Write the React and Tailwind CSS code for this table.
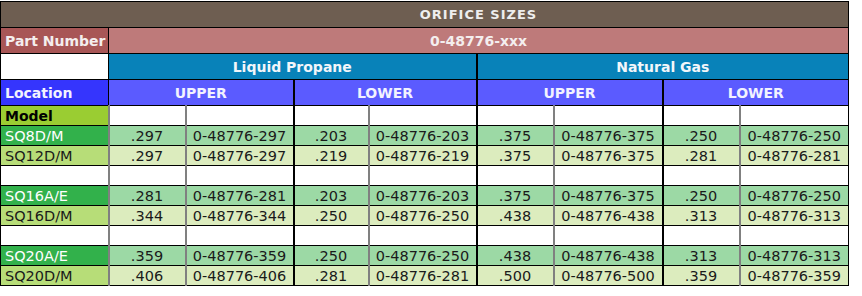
import React from 'react';

const groups = [
  [
    { model: 'SQ8D/M', vals: ['.297', '297', '.203', '203', '.375', '375', '.250', '250'] },
    { model: 'SQ12D/M', vals: ['.297', '297', '.219', '219', '.375', '375', '.281', '281'] },
  ],
  [
    { model: 'SQ16A/E', vals: ['.281', '281', '.203', '203', '.375', '375', '.250', '250'] },
    { model: 'SQ16D/M', vals: ['.344', '344', '.250', '250', '.438', '438', '.313', '313'] },
  ],
  [
    { model: 'SQ20A/E', vals: ['.359', '359', '.250', '250', '.438', '438', '.313', '313'] },
    { model: 'SQ20D/M', vals: ['.406', '406', '.281', '281', '.500', '500', '.359', '359'] },
  ],
];

// left border for each of the 8 value columns
const sep = [
  'border-l-2 border-l-[#808080]',
  'border-l-2 border-l-[#808080]',
  'border-l-2 border-l-black',
  'border-l-2 border-l-[#808080]',
  'border-l-2 border-l-black',
  'border-l-2 border-l-[#808080]',
  'border-l-2 border-l-black',
  'border-l-2 border-l-[#808080]',
];

function DataRow({ row, first }) {
  const bg = first ? 'bg-[#9cd9a5]' : 'bg-[#dcecbe]';
  return (
    <tr className="h-[20px]">
      <td className={`border border-black px-[4px] text-left ${first ? 'bg-[#32b14b] text-white' : 'bg-[#b7dd78] text-[#1a1a1a]'}`}>
        {row.model}
      </td>
      {row.vals.map((v, i) => (
        <td key={i} className={`border border-black ${sep[i]} ${bg} text-center text-[#1a1a1a]`}>
          {i % 2 === 0 ? v : `0-48776-${v}`}
        </td>
      ))}
    </tr>
  );
}

function BlankRow({ label }) {
  return (
    <tr className="h-[20px]">
      <td className={`border border-black px-[4px] font-bold text-[14px] ${label ? 'bg-[#9acd32] text-black' : 'bg-white'}`}>{label}</td>
      {sep.map((s, i) => (
        <td key={i} className={`border border-black ${s} bg-white`}></td>
      ))}
    </tr>
  );
}

export default function App() {
  return (
    <div className="bg-white w-[862px] h-[296px] pt-px" style={{ fontFamily: '"DejaVu Sans", Verdana, sans-serif' }}>
      <table className="table-fixed border-collapse w-[848px] text-[14.5px] leading-[18px]">
        <colgroup>
          <col className="w-[108px]" />
          <col className="w-[77px]" />
          <col className="w-[108px]" />
          <col className="w-[75px]" />
          <col className="w-[108px]" />
          <col className="w-[77px]" />
          <col className="w-[109px]" />
          <col className="w-[77px]" />
          <col className="w-[109px]" />
        </colgroup>
        <tbody className="[&_th]:font-bold">
          <tr className="h-[26px]">
            <td colSpan={9} className="border border-black bg-[#6e5e51] pl-[108px] text-center font-bold text-[13px] tracking-[1px] text-[#eeeeee]">
              ORIFICE SIZES
            </td>
          </tr>
          <tr className="h-[26px] text-[14px]">
            <td className="border border-black bg-[#a85656] px-[4px] font-bold text-[#f4eeee] whitespace-nowrap">Part Number</td>
            <td colSpan={8} className="border border-black bg-[#be7a7a] text-center font-bold text-[#f4eeee]">0-48776-xxx</td>
          </tr>
          <tr className="h-[26px] text-[14px]">
            <td className="border border-black bg-white"></td>
            <td colSpan={4} className="border border-black bg-[#0882b9] text-center font-bold text-[#f2f6fa]">Liquid Propane</td>
            <td colSpan={4} className="border border-black border-l-2 bg-[#0882b9] text-center font-bold text-[#f2f6fa]">Natural Gas</td>
          </tr>
          <tr className="h-[26px] text-[14px]">
            <td className="border border-black bg-[#3535fd] px-[4px] font-bold text-[#f2f2ff]">Location</td>
            <td colSpan={2} className="border border-black bg-[#5b5bff] text-center font-bold text-[#f2f2ff]">UPPER</td>
            <td colSpan={2} className="border border-black border-l-2 bg-[#5b5bff] text-center font-bold text-[#f2f2ff]">LOWER</td>
            <td colSpan={2} className="border border-black border-l-2 bg-[#5b5bff] text-center font-bold text-[#f2f2ff]">UPPER</td>
            <td colSpan={2} className="border border-black border-l-2 bg-[#5b5bff] text-center font-bold text-[#f2f2ff]">LOWER</td>
          </tr>
          <BlankRow label="Model" />
          {groups.map((g, gi) => (
            <React.Fragment key={gi}>
              {gi > 0 && <BlankRow />}
              <DataRow row={g[0]} first />
              <DataRow row={g[1]} />
            </React.Fragment>
          ))}
        </tbody>
      </table>
    </div>
  );
}
